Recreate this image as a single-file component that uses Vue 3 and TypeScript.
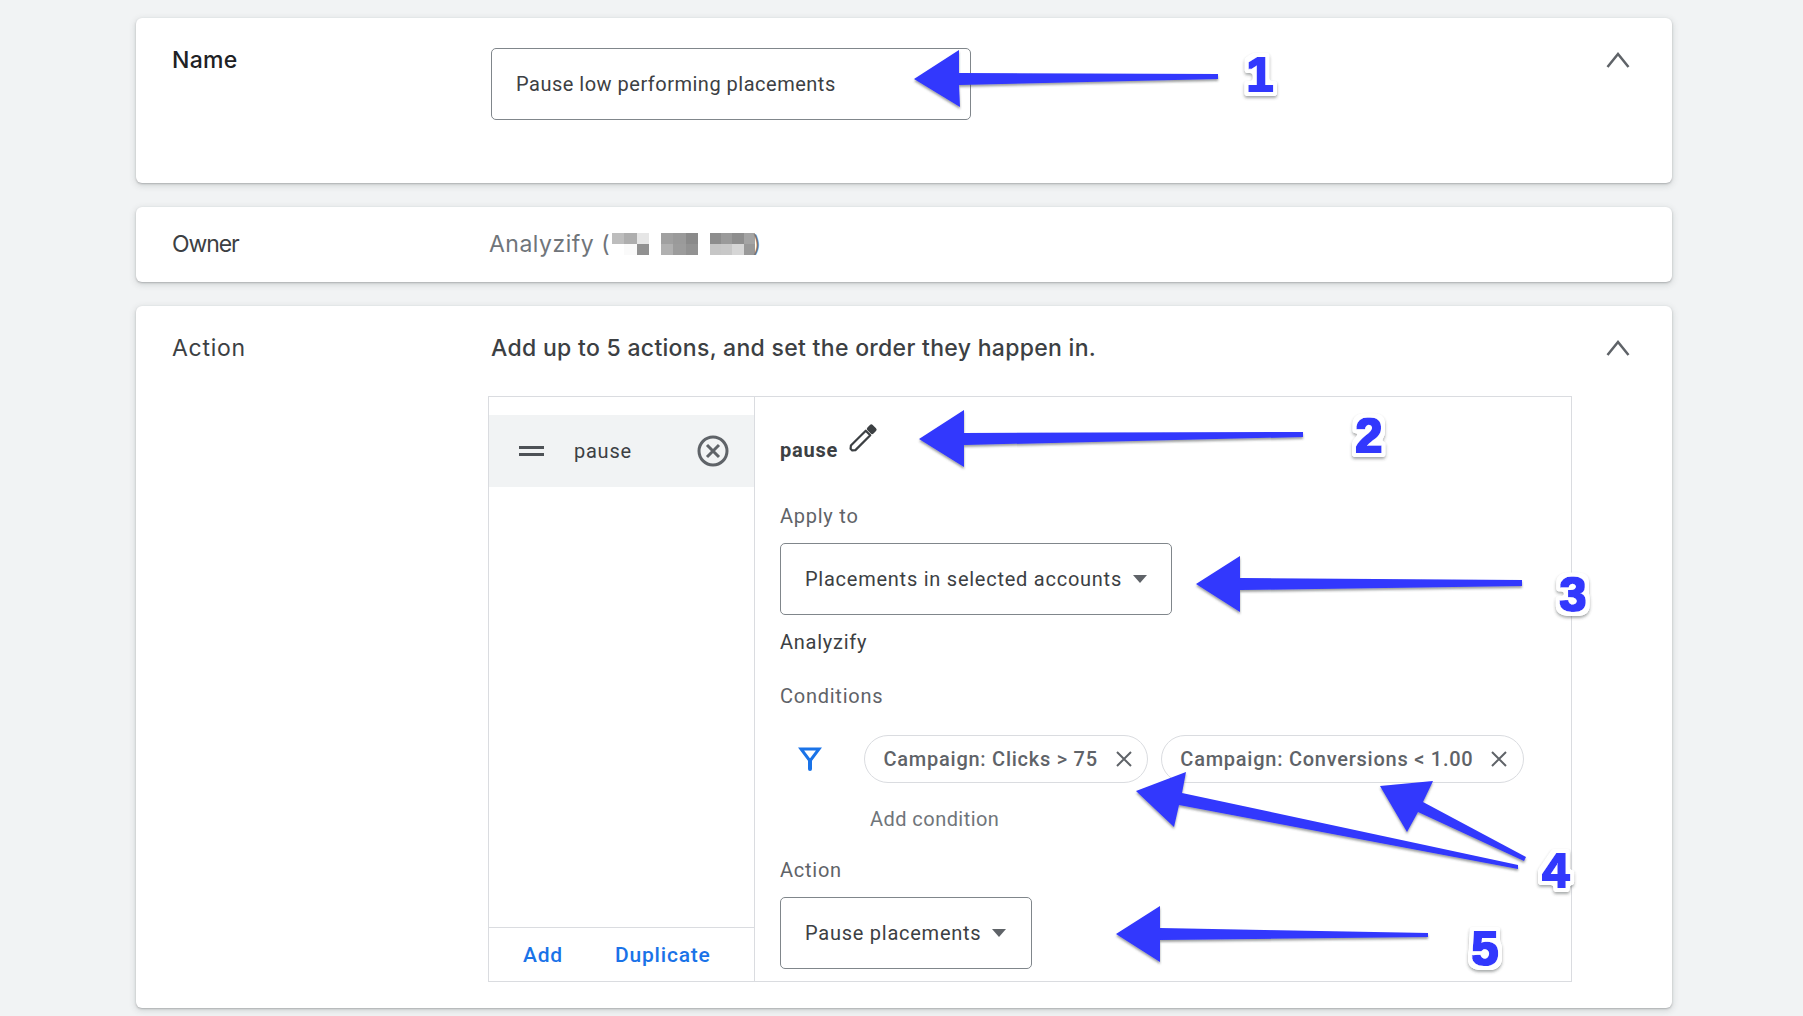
<script setup lang="ts">
const blocks: string[][] = [
  ['#bdbdbd', '#aeaeae', '#e6e6e6', '#ffffff', '#fafafa', '#919191'],
  ['#a0a0a0', '#9a9a9a', '#8a8a8a', '#b0b0b0', '#9c9c9c', '#929292'],
  ['#8d8d8d', '#9a9a9a', '#8e8e8e', '#a4a4a4', '#c6c6c6', '#c8c8c8', '#d6d6d6', '#999999'],
]
const arrows: string[] = [
  '914,79 959,50 959,73 1218,74 1218,79 959,85 960,107',
  '919,439 964,410 964,433 1303,432 1303,437 964,445 964,467',
  '1196,584 1240,556 1240,578 1522,580 1522,586 1240,590 1240,612',
  '1136,791 1186,772 1182,793 1518,865 1518,869 1179,805 1174,827',
  '1380,786 1433,781 1423,802 1526,857 1524,861 1418,812 1407,832',
  '1116,934 1160,906 1160,928 1428,933 1428,937 1160,940 1160,962',
]
const numbers = [
  { t: '1', x: 1260, y: 91 },
  { t: '2', x: 1369, y: 452 },
  { t: '3', x: 1573, y: 611 },
  { t: '4', x: 1556, y: 887 },
  { t: '5', x: 1485, y: 965 },
]
const chips: string[] = ['Campaign: Clicks > 75', 'Campaign: Conversions < 1.00']
</script>

<template>
  <div class="page">
    <section class="card card-name">
      <h2 class="label strong">Name</h2>
      <div class="field name-field">Pause low performing placements</div>
      <svg class="chev" viewBox="0 0 24 24" width="24" height="24"><path d="M1.500 19 12 6l10.500 13" /></svg>
    </section>

    <section class="card card-owner">
      <h2 class="label label-owner">Owner</h2>
      <div class="owner">
        <span>Analyzify (</span>
        <span class="blur-wrap">
          <span v-for="(b, i) in blocks" :key="i" class="blur" :class="'blur-' + i">
            <i v-for="(c, j) in b" :key="j" :style="{ background: c }"></i>
          </span>
        </span>
        <span>)</span>
      </div>
    </section>

    <section class="card card-action">
      <h2 class="label label-action">Action</h2>
      <p class="lead">Add up to 5 actions, and set the order they happen in.</p>
      <svg class="chev" viewBox="0 0 24 24" width="24" height="24"><path d="M1.500 19 12 6l10.500 13" /></svg>

      <div class="table">
        <aside class="list">
          <div class="row">
            <span class="drag"><i></i><i></i></span>
            <span class="row-name">pause</span>
            <svg class="remove" viewBox="0 0 34 34" width="34" height="34">
              <circle cx="17" cy="17" r="14" />
              <path d="M11 11l12 12M23 11L11 23" />
            </svg>
          </div>
          <div class="list-foot">
            <a class="link">Add</a>
            <a class="link">Duplicate</a>
          </div>
        </aside>

        <div class="detail">
          <div class="title-row">
            <strong>pause</strong>
            <svg class="pencil" viewBox="0 0 28 28" width="28" height="28">
              <g transform="rotate(45 14 14)">
                <path class="pencil-body" d="M10.800 5.500h6.400v21l-2 2.500h-2.400l-2-2.500z" />
                <rect class="pencil-cap" x="9.700" y="-3.500" width="8.600" height="7.500" rx="2" />
              </g>
            </svg>
          </div>

          <div class="cap cap-apply">Apply to</div>
          <div class="field select select-apply">
            <span>Placements in selected accounts</span>
            <i class="caret"></i>
          </div>
          <div class="account">Analyzify</div>

          <div class="cap cap-cond">Conditions</div>
          <div class="cond-row">
            <svg class="funnel" viewBox="0 0 24 24" width="24" height="24">
              <path d="M3 1.900h18L12 14z" />
              <path d="M12 13.500v8.500" />
            </svg>
            <div v-for="c in chips" :key="c" class="chip">
              <span>{{ c }}</span>
              <svg viewBox="0 0 16 16" width="16" height="16"><path d="M1 1l14 14M15 1L1 15" /></svg>
            </div>
          </div>
          <div class="add-cond">Add condition</div>

          <div class="cap cap-action">Action</div>
          <div class="field select select-action">
            <span>Pause placements</span>
            <i class="caret"></i>
          </div>
        </div>
      </div>
    </section>

    <svg class="notes" viewBox="0 0 1803 1016" width="1803" height="1016">
      <defs>
        <filter id="arrow-shadow" x="-10%" y="-30%" width="120%" height="170%">
          <feDropShadow dx="0" dy="2" stdDeviation="1.200" flood-color="#3c4043" flood-opacity=".5" />
        </filter>
        <filter id="num-outline" x="-50%" y="-50%" width="200%" height="200%">
          <feMorphology in="SourceAlpha" operator="dilate" radius="4.500" result="fat" />
          <feGaussianBlur in="fat" stdDeviation="1.800" result="soft" />
          <feComponentTransfer in="soft" result="halo">
            <feFuncA type="linear" slope="6" intercept="-2.500" />
          </feComponentTransfer>
          <feFlood flood-color="#ffffff" result="white" />
          <feComposite in="white" in2="halo" operator="in" result="outline" />
          <feDropShadow in="outline" dx="0" dy="2" stdDeviation="1.500" flood-color="#3c4043" flood-opacity=".45" result="outlined" />
          <feMorphology in="SourceGraphic" operator="dilate" radius=".7" result="bold" />
          <feMerge>
            <feMergeNode in="outlined" />
            <feMergeNode in="bold" />
          </feMerge>
        </filter>
      </defs>
      <polygon v-for="(p, i) in arrows" :key="i" :points="p" class="arrow" filter="url(#arrow-shadow)" />
      <text v-for="n in numbers" :key="n.t" :x="n.x" :y="n.y" class="num" filter="url(#num-outline)">{{ n.t }}</text>
    </svg>
  </div>
</template>

<style>
html, body { margin: 0; background: #f1f3f4; }
</style>

<style scoped>
.page {
  position: relative;
  box-sizing: border-box;
  width: 1803px;
  height: 1016px;
  padding: 18px 131px 0 136px;
  overflow: hidden;
  background: #f1f3f4;
  font-family: Roboto, "Liberation Sans", sans-serif;
  font-size: 20px;
  line-height: 24px;
  letter-spacing: .75px;
  color: #3c4043;
}
.card {
  box-sizing: border-box;
  display: grid;
  grid-template-columns: 319px 1fr 24px;
  align-content: start;
  padding: 30px 42px 0 36px;
  margin-bottom: 24px;
  background: #fff;
  border-radius: 6px;
  box-shadow: 0 1px 2px rgba(60, 64, 67, .3), 0 2px 6px 1px rgba(60, 64, 67, .15);
}
.card-name { height: 165px; }
.card-owner { height: 75px; padding: 0 42px 2px 36px; align-content: center; align-items: center; }
.card-action { height: 702px; margin-bottom: 0; }
.label, .lead, .owner {
  margin: 0;
  font-family: Inter, Roboto, sans-serif;
  font-size: 23px;
  line-height: 24px;
  letter-spacing: .3px;
  color: #3c4043;
  font-weight: 400;
}
.label.strong { font-weight: 500; color: #202124; }
.label-owner { letter-spacing: -1.100px; }
.label-action { letter-spacing: .7px; }
.lead { font-weight: 500; }
.owner {
  grid-column: 2 / 4;
  margin-left: -2px;
  display: flex;
  align-items: center;
  letter-spacing: .5px;
  color: #70757a;
}
.blur-wrap { display: flex; margin: 0 -2px 0 2px; }
.blur { display: grid; grid-auto-rows: 11px; grid-template-columns: repeat(3, 12.300px); }
.blur-1 { margin-left: 12px; }
.blur-2 { margin-left: 12px; grid-template-columns: repeat(4, 11.250px); }
.blur i { display: block; }
.chev { grid-column: 3; grid-row: 1; }
.chev path { fill: none; stroke: #5f6368; stroke-width: 2.500; }
.field {
  box-sizing: border-box;
  height: 72px;
  display: flex;
  align-items: center;
  padding-left: 24px;
  border: 1px solid #80868b;
  border-radius: 5px;
  background: #fff;
}
.name-field { width: 480px; letter-spacing: .5px; }
.table {
  grid-column: 2 / 4;
  grid-row: 2;
  box-sizing: border-box;
  width: 1084px;
  height: 586px;
  margin: 36px 0 0 -3px;
  display: grid;
  grid-template-columns: 266px 1fr;
  border: 1px solid #dadce0;
}
.list {
  display: flex;
  flex-direction: column;
  padding-top: 18px;
  border-right: 1px solid #dadce0;
}
.row {
  height: 72px;
  display: flex;
  align-items: center;
  padding-left: 30px;
  background: #f1f3f4;
}
.drag { width: 25px; display: flex; flex-direction: column; gap: 3.500px; }
.drag i { display: block; height: 3px; background: #4d5156; }
.row-name { margin-left: 30px; flex: 1; }
.remove { margin-right: 24px; }
.remove circle, .remove path { fill: none; stroke: #5f6368; stroke-width: 3; }
.list-foot {
  margin-top: auto;
  height: 54px;
  box-sizing: border-box;
  display: flex;
  align-items: center;
  gap: 52px;
  padding-left: 34px;
  border-top: 1px solid #dadce0;
}
.link { color: #1a73e8; font-weight: 500; font-size: 21px; letter-spacing: .8px; }
.detail { padding: 41px 0 0 25px; display: flex; flex-direction: column; align-items: flex-start; }
.title-row { height: 24px; display: flex; }
.title-row strong { font-weight: 700; }
.pencil { margin: -13px 0 0 10px; overflow: visible; }
.pencil-body { fill: none; stroke: #3c4043; stroke-width: 2.200; stroke-linejoin: round; }
.pencil-cap { fill: #3c4043; }
.cap { color: #5f6368; }
.cap-apply { margin-top: 42px; }
.cap-cond { margin-top: 30px; }
.cap-action { margin-top: 27px; }
.select { margin-top: 15px; }
.select-apply { width: 392px; }
.select-action { width: 252px; }
.caret {
  margin-left: 11px;
  border-left: 7.500px solid transparent;
  border-right: 7.500px solid transparent;
  border-top: 8px solid #5f6368;
}
.account { margin-top: 15px; }
.cond-row { margin-top: 27px; display: flex; align-items: center; gap: 12.500px; }
.funnel { margin: 0 29.500px 0 18px; overflow: visible; }
.funnel path { fill: none; stroke: #1a73e8; stroke-width: 3; stroke-linejoin: miter; }
.funnel path + path { stroke-width: 4; stroke-linecap: round; }
.chip {
  box-sizing: border-box;
  height: 48px;
  display: flex;
  align-items: center;
  gap: 18px;
  padding: 0 15.500px 0 18.500px;
  border: 1px solid #dadce0;
  border-radius: 24px;
  color: #5f6368;
  font-weight: 500;
}
.chip svg path { fill: none; stroke: #5f6368; stroke-width: 2; }
.add-cond { margin: 24px 0 0 90px; color: #70757a; letter-spacing: .45px; }
.notes { position: absolute; left: 0; top: 0; pointer-events: none; }
.arrow { fill: #3137fd; }
.num {
  fill: #3137fd;
  font-family: "Liberation Sans", sans-serif;
  font-weight: 700;
  font-size: 49px;
  letter-spacing: 0;
  text-anchor: middle;
}
</style>
